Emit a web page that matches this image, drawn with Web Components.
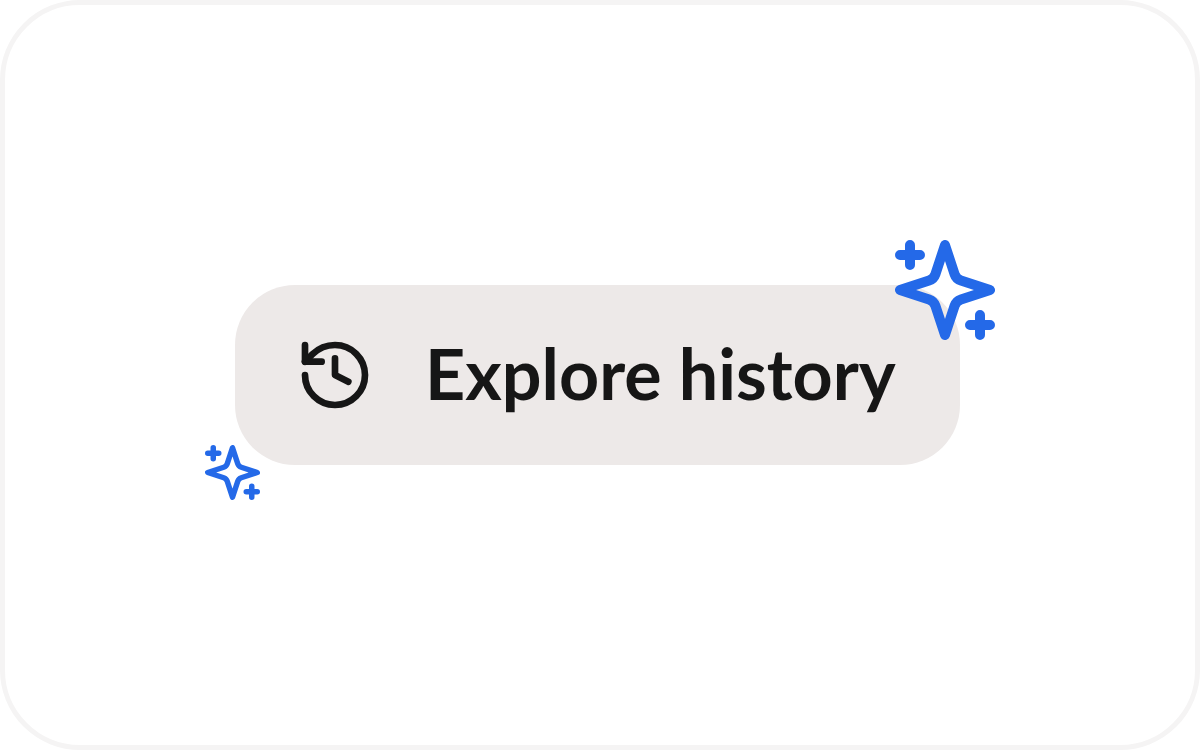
<!DOCTYPE html>
<html lang="en">
<head>
<meta charset="utf-8">
<title>Explore history</title>
<style>
  body {
    margin: 0;
    background: #fff;
    font-family: Lato, "Liberation Sans", sans-serif;
    color: #161616;
  }
</style>
</head>
<body>
<preview-card>
  <history-button>Explore history</history-button>
</preview-card>

<script>
class PreviewCard extends HTMLElement {
  connectedCallback() {
    this.attachShadow({ mode: 'open' });
    this.shadowRoot.innerHTML = `
      <style>
        :host {
          display: flex;
          align-items: center;
          justify-content: center;
          box-sizing: border-box;
          width: 1200px;
          height: 750px;
          background: #fff;
          border: 5px solid #f5f4f4;
          border-radius: 80px;
          padding-right: 5px;
        }
      </style>
      <slot></slot>
    `;
  }
}
customElements.define('preview-card', PreviewCard);

class HistoryIcon extends HTMLElement {
  connectedCallback() {
    this.attachShadow({ mode: 'open' });
    this.shadowRoot.innerHTML = `
      <style>
        :host {
          display: block;
          width: 80px;
          height: 80px;
        }
        svg {
          display: block;
          width: 100%;
          height: 100%;
        }
      </style>
      <svg viewBox="0 0 24 24" fill="none" stroke="currentColor" stroke-width="2" stroke-linecap="round" stroke-linejoin="round">
        <path d="M3 12a9 9 0 1 0 9-9 9.75 9.75 0 0 0-6.74 2.74L3 8"/>
        <path d="M3 3v5h5"/>
        <path d="M12 7v5l4 2"/>
      </svg>
    `;
  }
}
customElements.define('history-icon', HistoryIcon);

class SparkleIcon extends HTMLElement {
  connectedCallback() {
    this.attachShadow({ mode: 'open' });
    this.shadowRoot.innerHTML = `
      <style>
        :host {
          display: block;
          color: #2469e8;
        }
        svg {
          display: block;
          width: 100%;
          height: 100%;
        }
      </style>
      <svg viewBox="2 2 20 20" fill="none" stroke="currentColor" stroke-width="2" stroke-linecap="round" stroke-linejoin="round">
        <path d="m12 3-1.912 5.813a2 2 0 0 1-1.275 1.275L3 12l5.813 1.912a2 2 0 0 1 1.275 1.275L12 21l1.912-5.813a2 2 0 0 1 1.275-1.275L21 12l-5.813-1.912a2 2 0 0 1-1.275-1.275L12 3Z"/>
        <path d="M5 3v4M3 5h4M19 17v4M17 19h4"/>
      </svg>
    `;
  }
}
customElements.define('sparkle-icon', SparkleIcon);

class HistoryButton extends HTMLElement {
  connectedCallback() {
    this.attachShadow({ mode: 'open' });
    this.shadowRoot.innerHTML = `
      <style>
        :host {
          display: block;
          position: relative;
        }
        button {
          display: flex;
          align-items: center;
          gap: 50px;
          box-sizing: border-box;
          width: 725px;
          height: 180px;
          padding: 0 60px;
          border: 0;
          border-radius: 60px;
          background: #ede9e8;
          color: inherit;
          font: 700 70px/90px Lato, "Liberation Sans", sans-serif;
          white-space: nowrap;
        }
        .label {
          padding-bottom: 4px;
        }
        /* sparkles hang over the button's corners */
        .large {
          position: absolute;
          top: -45px;
          right: -35px;
          width: 100px;
          height: 100px;
        }
        .small {
          position: absolute;
          bottom: -35px;
          left: -30px;
          width: 55px;
          height: 55px;
        }
      </style>
      <button type="button">
        <history-icon></history-icon>
        <span class="label"><slot></slot></span>
      </button>
      <sparkle-icon class="large"></sparkle-icon>
      <sparkle-icon class="small"></sparkle-icon>
    `;
  }
}
customElements.define('history-button', HistoryButton);
</script>
</body>
</html>
